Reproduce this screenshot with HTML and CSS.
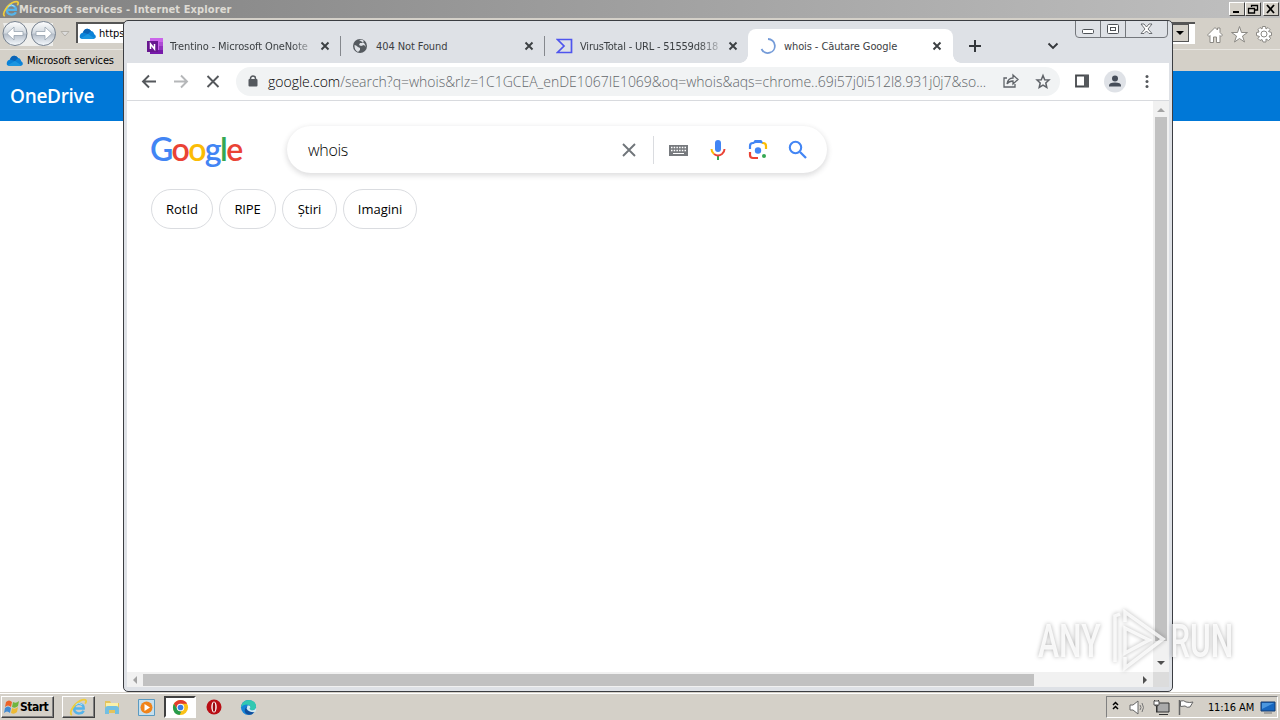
FILE: index.html
```html
<!DOCTYPE html>
<html lang="ro">
<head>
  <meta charset="UTF-8" />
  <title>whois - Căutare Google</title>
  <link rel="stylesheet" href="styles.css">
</head>
<body>
<!-- shared shapes -->
<svg class="defs">
  <symbol id="cloud" viewBox="0 0 17 12">
    <path d="M1 10C0 7 2 5 4 4.500C5 1 9-1 12 3C14 3 15 5 15 6C18 8 17 11 14 11H4Q2 11 1 10Z" fill="#0a82d8"/>
    <path d="M4 4.500C5 1 9-1 12 3L9 6Z" fill="#0b63b5"/><path d="M2 10L9 6L15 10L14 11H4Z" fill="#1c96e0"/>
  </symbol>
  <symbol id="ie" viewBox="0 0 20 20">
    <path d="M15.500 13.500C14 16.500 8.500 17.500 6 14C4 10 6.500 6 10 6C13.500 6 16 8.500 15.500 11H6.500" fill="none" stroke="#55b4ea" stroke-width="2.600"/>
    <path d="M3 18C-1 15 7 4 14 2C18 1 19 3 17 6" fill="none" stroke="#f0cd3c" stroke-width="1.900"/>
    <path d="M7 7Q10 4 14 7" fill="none" stroke="#b5e6ff" stroke-width="1"/>
  </symbol>
  <symbol id="close" viewBox="0 0 10 10"><path d="M1.500 1.500L8.500 8.500M8.500 1.500L1.500 8.500" stroke="#3c4043" stroke-width="1.900"/></symbol>
</svg>

<div class="desktop">
  <div class="ie-title">
    <svg width="18" height="18"><use href="#ie"/></svg>
    <span>Microsoft services - Internet Explorer</span>
    <div class="ie-controls">
      <i><svg width="12" height="10"><path d="M2 8H8" stroke="#000" stroke-width="2"/></svg></i>
      <i><svg width="12" height="10"><path d="M4.500 3V1.500H10.500V6H8M1.500 4.500H7.500V9H1.500ZM4 1.500H11M1 4.500H8" fill="none" stroke="#000" stroke-width="1.300"/></svg></i>
      <i class="last"><svg width="12" height="10"><path d="M2 1L9 9M9 1L2 9" stroke="#000" stroke-width="1.800"/></svg></i>
    </div>
  </div>
  <div class="ie-nav">
    <svg class="ie-arrows" width="74" height="30" viewBox="0 0 74 30">
      <defs><linearGradient id="ball" x2="0" y2="1"><stop stop-color="#fff"/><stop offset=".48" stop-color="#d1d8df"/><stop offset=".52" stop-color="#b3bcc7"/><stop offset="1" stop-color="#f7fbff"/></linearGradient></defs>
      <path d="M3 4H53V27H10Z" fill="#eeeeec"/>
      <circle cx="15" cy="14.500" r="12" fill="url(#ball)" stroke="#76818f"/>
      <circle cx="43.500" cy="14.500" r="12" fill="url(#ball)" stroke="#76818f"/>
      <g fill="#fff" stroke="#98a3b0" stroke-width=".8"><path d="M7 14.500L14 8V12.500H23V16.500H14V21Z"/><path d="M52 14.500L45 8V12.500H36V16.500H45V21Z"/></g>
      <path d="M61 12.500H69L65 17Z" fill="#ddd" stroke="#b3b0a9"/>
    </svg>
    <div class="ie-address"><svg width="17" height="12"><use href="#cloud"/></svg><span>https</span></div>
    <div class="ie-right">
      <div class="ie-drop"><b></b></div>
      <svg width="68" height="20" viewBox="0 0 68 20" fill="#fff" stroke="#8b8984">
        <path d="M1.500 11L9 3.500L11.500 6V4H14V8.500L16.500 11L15 12.500L14 11.500V18.500H10.500V13H7.500V18.500H4V11.500L3 12.500Z"/>
        <path d="M33.500 2.500L35.500 8.500H41.500L36.500 12L38.500 18L33.500 14.500L28.500 18L30.500 12L25.500 8.500H31.500Z"/>
        <path d="M56.500 2.500H59.500L60 5L62 3.500L64 5.500L62.500 7.500L65.500 8.500V11.500L63 12L64.500 14.500L62.500 16.500L60 15V18H57L56 15.500L54 16.500L52 14.500L53.500 12.500L50.500 11.500V8.500L53 8L52 5.500L54 3.500L56 5Z"/>
        <circle cx="58" cy="10" r="3"/>
      </svg>
    </div>
  </div>
  <div class="ie-favs"><svg width="17" height="12"><use href="#cloud"/></svg><span>Microsoft services</span></div>
  <div class="onedrive">OneDrive</div>
  <div class="ie-page"></div>

  <div class="taskbar">
    <div class="start">
      <svg width="16" height="16" viewBox="0 0 16 16"><path d="M2 3Q5 0 8 3L7 8Q4 5 1 8Z" fill="#ed6428"/><path d="M9 3Q12 5 15 2L14 7Q11 10 8 8Z" fill="#70b53d"/><path d="M1 9Q4 6 7 9L6 14Q3 11 0 14Z" fill="#428bd3"/><path d="M8 9Q11 11 14 8L13 13Q10 16 7 14Z" fill="#edba35"/></svg>
      <span>Start</span>
    </div>
    <div class="task raised"><svg width="19" height="19"><use href="#ie"/></svg></div>
    <div class="task"><svg width="18" height="18" viewBox="0 0 18 18"><path d="M2 3H7L8 5H16V15H2Z" fill="#e5c35c"/><path d="M3 5H15V10H3Z" fill="#faf0a9"/><path d="M2 16V11Q2 8 5 8H13Q16 8 16 11V16H12V12H6V16Z" fill="#72bfe2"/></svg></div>
    <div class="task"><svg width="17" height="17" viewBox="0 0 17 17"><path d="M.5.500H16.500V16.500H.5Z" fill="#c6dfed" stroke="#5a9ac1"/><circle cx="8.500" cy="8.500" r="6" fill="#f08319"/><path d="M6.500 5L12 8.500L6.500 12Z" fill="#fff"/></svg></div>
    <div class="task pressed"><svg width="17" height="17" viewBox="0 0 18 18"><circle cx="9" cy="9" r="8" fill="#fbc116"/><path d="M2 5Q5 1 9 1Q14 1 16 5H9L6 11Z" fill="#e33b2e"/><path d="M2 5L6 11Q8 14 10 13L8 17Q1 16 1 9Q1 7 2 5Z" fill="#269b4a"/><circle cx="9" cy="9" r="4" fill="#fff"/><circle cx="9" cy="9" r="3" fill="#397de4"/></svg></div>
    <div class="task"><svg width="16" height="16" viewBox="0 0 16 16"><circle cx="8" cy="8" r="7.500" fill="#b90e15"/><ellipse cx="8" cy="8" rx="2.700" ry="5.500" fill="#fff"/><ellipse cx="8" cy="8" rx="1.300" ry="4.800" fill="#9b0910"/></svg></div>
    <div class="task"><svg width="17" height="17" viewBox="0 0 18 18"><circle cx="9" cy="9" r="8" fill="#1684d7"/><path d="M1 9Q2 1 10 1Q17 2 17 8Q17 12 12 12Q9 11 11 9Q11 6 8 6Q4 5 1 9Z" fill="#32c8b1"/><path d="M7 8Q6 14 15 14Q12 18 7 16Q3 13 7 8Z" fill="#114e9c"/><path d="M11 9Q9 11 12 12Q16 12 17 9V13L15 14Q9 14 7 10L8 7Q11 6 11 9Z" fill="#d4e9ef"/></svg></div>
    <div class="tray">
      <svg width="86" height="20" viewBox="0 0 86 20" fill="none">
        <path d="M5 8L7.500 5.500L10 8M5 12L7.500 9.500L10 12" stroke="#000" stroke-width="1.500"/>
        <path d="M22 8H25L30 4V17L25 13H22Z" fill="#fff" stroke="#666"/><path d="M32 8Q34 10.500 32 13M34 6Q37 10.500 34 15" stroke="#777"/>
        <path d="M49 6H61V15H49Z" fill="#aaa" stroke="#333"/><path d="M51 17.500H60M46.500 3V7Q46.500 9 48.500 9V15.500M50.500 3V7Q50.500 9 48.500 9" stroke="#333"/><path d="M46 4H51V8H46Z" fill="#fff" stroke="#555"/>
        <path d="M71.500 3V18" stroke="#666" stroke-width="1.500"/><path d="M72.500 4Q76 3 78 5Q82 6 85 5L82 10Q79 11 77 9L72.500 9.500Z" fill="#fff" stroke="#666"/>
      </svg>
      <span>11:16 AM</span>
      <svg width="16" height="14" viewBox="0 0 16 14"><path d="M1 2H15V11H1Z" fill="#1767c0" stroke="#163d70"/><path d="M2 3H14L2 9Z" fill="#4b97df"/><path d="M4 13H12" stroke="#777"/></svg>
    </div>
  </div>

  <div class="chrome">
    <div class="tabstrip">
      <div class="tab">
        <svg class="fav" width="16" height="16" viewBox="0 0 16 16"><path d="M3 0H16V16H3Z" fill="#ca64ea"/><path d="M12 4H16V8H12Z" fill="#ae4bd5"/><path d="M12 8H16V12H12Z" fill="#9332bf"/><path d="M12 12H16V16H3V12Z" fill="#7719aa"/><rect y="3" width="11" height="11" fill="#68168f"/><path d="M3.500 11V6L7.500 11V6" fill="none" stroke="#fff" stroke-width="1.500"/></svg>
        <span class="label t1">Trentino - Microsoft OneNote</span><svg class="x"><use href="#close"/></svg>
      </div>
      <div class="tab">
        <svg class="fav" width="16" height="16" viewBox="0 0 16 16"><circle cx="8" cy="8" r="7" fill="#555a5f"/><path d="M2.500 7Q4 7 6 9L8 10V12L6 14Q2 12 2.500 7ZM7 2Q10 1 12 3L10 5L8 5L7 7L9 8L12 7L14 9Q13 6 12 5" fill="#dee1e6"/></svg>
        <span class="label t2">404 Not Found</span><svg class="x"><use href="#close"/></svg>
      </div>
      <div class="tab">
        <svg class="fav" width="17" height="16" viewBox="0 0 17 16"><path d="M1.500 1.500H15.500V14.500H1.500L8 8Z" fill="none" stroke="#4f55ee" stroke-width="1.700"/></svg>
        <span class="label t3">VirusTotal - URL - 51559d818</span><svg class="x"><use href="#close"/></svg>
      </div>
      <div class="tab active">
        <svg class="fav" width="16" height="16" viewBox="0 0 16 16"><path d="M8 1A7 7 0 1 1 1.500 11" fill="none" stroke="#749bd8" stroke-width="1.800"/></svg>
        <span class="label t4">whois - Căutare Google</span><svg class="x"><use href="#close"/></svg>
      </div>
      <svg class="plus" width="14" height="14"><path d="M7 1V13M1 7H13" stroke="#34373b" stroke-width="2"/></svg>
      <svg class="chev" width="12" height="8"><path d="M1.500 1.500L6 6L10.500 1.500" fill="none" stroke="#34373b" stroke-width="1.900"/></svg>
    </div>
    <svg class="win-controls" width="94" height="18" viewBox="0 0 94 18" fill="none" stroke="#74777c">
      <path d="M.5 0V13Q.5 16.500 4 16.500H89Q92.500 16.500 92.500 13V0M25.500 0V16M50.500 0V16"/>
      <g stroke="#4d5156"><rect x="7.500" y="8.500" width="11" height="4" rx="1" fill="#fff"/><rect x="32.500" y="3.500" width="11" height="9" rx="1" fill="#fff"/><rect x="35.500" y="6.500" width="5" height="3"/><path d="M66 3H69L71.500 6L74 3H77L73 8L77 12.500H74L71.500 10L69 12.500H66L70 8Z" fill="#fff" stroke-width=".8"/></g>
    </svg>

    <div class="toolbar">
      <svg class="nav-icons" width="84" height="18" viewBox="0 0 84 18" fill="none" stroke-width="1.900">
        <path d="M16 8.500H3M9 2.500L3 8.500L9 14.500" stroke="#55585c"/><path d="M34 8.500H47M41 2.500L47 8.500L41 14.500" stroke="#b5b7b9"/><path d="M67.500 3L78.500 14M78.500 3L67.500 14" stroke="#55585c"/>
      </svg>
      <div class="omnibox">
        <svg width="10" height="14" viewBox="0 0 10 14"><path d="M2.500 5V3.500A2.500 2.500 0 0 1 7.500 3.500V5" fill="none" stroke="#55595e" stroke-width="1.500"/><rect x=".5" y="4" width="9" height="7.500" rx="1" fill="#55595e"/></svg>
        <span class="url"><b>google.com</b>/search?q=whois&amp;rlz=1C1GCEA_enDE1067IE1069&amp;oq=whois&amp;aqs=chrome..69i57j0i512l8.931j0j7&amp;so...</span>
        <svg class="omni-icons" width="50" height="18" viewBox="0 0 50 18" fill="none" stroke="#5f6368" stroke-width="1.300">
          <path d="M5 5H2V14H13V11M5 11Q6 5 11 5V2L16 6.500L11 11V8Q7 8 5 11Z"/><path d="M41 2.500L42.700 6.700L47 7L43.800 9.900L44.800 14.500L41 12.100L37.200 14.500L38.200 9.900L35 7L39.300 6.700Z" stroke-width="1.500"/>
        </svg>
      </div>
      <svg class="tool-icons" width="84" height="24" viewBox="0 0 84 24">
        <path d="M2 5.500H14V16.500H2Z" fill="#fff" stroke="#45484c" stroke-width="1.800"/><path d="M10 5H15V17H10Z" fill="#55585c"/>
        <circle cx="41" cy="11.500" r="11" fill="#dfe2e7"/><circle cx="41" cy="8.500" r="3" fill="#464d59"/><path d="M35 16.500V15.500Q35 12.500 41 12.500T47 15.500V16.500Z" fill="#464d59"/>
        <g fill="#55585c"><circle cx="73" cy="6.500" r="1.500"/><circle cx="73" cy="11.500" r="1.500"/><circle cx="73" cy="16.500" r="1.500"/></g>
      </svg>
    </div>

    <div class="viewport">
      <div class="results">
        <div class="search-row">
          <div class="google"><span class="b">G</span><span class="r">o</span><span class="y">o</span><span class="b">g</span><span class="g">l</span><span class="r">e</span></div>
          <div class="searchbox">
            <span>whois</span>
            <svg width="200" height="30" viewBox="0 0 200 30" fill="none">
              <path d="M6 9L18 21M18 9L6 21" stroke="#70757a" stroke-width="1.900"/><path d="M36.500 1V29" stroke="#dadce0"/>
              <rect x="52" y="10" width="19" height="11" fill="#777a7e"/><path d="M54 12.500H70M54 15.500H70" stroke="#fff" stroke-dasharray="1.500 1.200" stroke-width="1.300"/><path d="M56 18.500H67" stroke="#fff"/>
              <rect x="98" y="5" width="6" height="12" rx="3" fill="#4285f4"/><path d="M101 20V25" stroke="#34a853" stroke-width="2"/><path d="M94.500 14Q94.500 17 97 19" stroke="#fbbc04" stroke-width="2"/><path d="M97 19Q101 22 105 19Q107.500 17 107.500 14" stroke="#ea4335" stroke-width="2"/>
              <g stroke-width="2.200"><path d="M133 14V11Q133 8 136 8H137M137 8L138.500 6H143.500L145 8" stroke="#4285f4"/><path d="M145 8H146Q149 8 149 11V14" stroke="#fbbc04"/><path d="M133 17V20Q133 23 136 23H141" stroke="#ea4335"/></g><path d="M136 8L138 5H144L146 8Z" fill="#4285f4"/><circle cx="141" cy="15.500" r="3.200" fill="#4285f4"/><circle cx="147" cy="21" r="2" fill="#34a853"/>
              <circle cx="178.500" cy="12.500" r="5.700" stroke="#4285f4" stroke-width="2.100"/><path d="M183 17L189 23" stroke="#4285f4" stroke-width="2.300"/>
            </svg>
          </div>
        </div>
        <div class="chips"><span class="c1">RotId</span><span class="c2">RIPE</span><span class="c3">Știri</span><span class="c4">Imagini</span></div>
      </div>
      <div class="vscroll"><i class="up"></i><div class="thumb"></div><i class="down"></i></div>
      <div class="hscroll"><i class="left"></i><div class="thumb"></div><i class="right"></i></div>
      <div class="corner"></div>
    </div>
  </div>

  <div class="watermark">
    <span>ANY</span>
    <svg width="60" height="64" viewBox="0 0 60 64" fill="none" stroke="#fff" stroke-width="3.500"><path d="M8 53V7L13 5M18 13V3L56 30L18 59V48M18 19V44L42 31Z"/></svg>
    <span>RUN</span>
  </div>
</div>
</body>
</html>
```
FILE: styles.css
```css
* {
  box-sizing: border-box;
}
body {
  margin: 0;
  overflow: hidden;
  font-family: 'DejaVu Sans Condensed', 'DejaVu Sans', sans-serif;
  font-size: 11px;
  color: #000;
}
svg {
  flex: none;
  display: block;
}
span {
  white-space: nowrap;
}
.defs {
  position: absolute;
  width: 0;
  height: 0;
}
.desktop {
  position: relative;
  width: 1280px;
  height: 720px;
  display: flex;
  flex-direction: column;
  background: #d4d0c8;
}

/* internet explorer */
.ie-title {
  height: 18px;
  padding-left: 2px;
  display: flex;
  align-items: center;
  background: linear-gradient(90deg, #808080, #c0c0c0);
  color: #dedbd4;
  font-weight: bold;
}
.ie-title span {
  letter-spacing: 0.1px;
  margin-left: -1px;
}
.ie-controls {
  margin-left: auto;
  display: flex;
  padding-right: 1px;
}
.ie-controls i {
  width: 16px;
  height: 14px;
  padding: 1px;
  background: #d4d0c8;
  border: 1px solid;
  border-color: #fff #404040 #404040 #fff;
}
.ie-controls .last {
  margin-left: 2px;
}
.ie-nav {
  height: 31px;
  display: flex;
  align-items: center;
}
.ie-address {
  width: 70px;
  height: 21px;
  margin: 0 0 2px 2px;
  padding-left: 1px;
  display: flex;
  align-items: center;
  gap: 3px;
  background: #fff;
  border: 1px solid #555;
  border-width: 2px 0 0 2px;
}
.ie-right {
  margin-left: auto;
  display: flex;
  align-items: center;
  gap: 11px;
  padding-right: 6px;
}
.ie-drop {
  width: 24px;
  height: 22px;
  margin-bottom: 1px;
  background: #fff;
  border-top: 2px solid #555;
}
.ie-drop b {
  display: flex;
  width: 18px;
  height: 18px;
  background: #d4d0c8;
  border: 1px solid #555;
  align-items: center;
  justify-content: center;
}
.ie-drop b::after {
  content: '';
  border: 4px solid transparent;
  border-top-color: #000;
  border-bottom: 0;
}
.ie-favs {
  height: 22px;
  padding-left: 6px;
  display: flex;
  align-items: center;
  gap: 4px;
  border-top: 1px solid #e8e6e1;
}
.ie-favs span {
  letter-spacing: -0.1px;
}
.onedrive {
  height: 50px;
  padding-left: 10px;
  background: #0078d7;
  color: #fff;
  font: 600 19px/50px 'Open Sans', sans-serif;
  letter-spacing: -0.3px;
}
.ie-page {
  flex: 1;
  background: #fff;
}

/* taskbar */
.taskbar {
  height: 28px;
  padding: 3px 2px 2px 1px;
  display: flex;
  background: #d4d0c8;
  border-top: 1px solid #d4d0c8;
  box-shadow: inset 0 1px #fff;
}
.start {
  width: 53px;
  margin-right: 8px;
  display: flex;
  align-items: center;
  padding-left: 2px;
  font-weight: bold;
  border: 1px solid;
  border-color: #fff #404040 #404040 #fff;
  box-shadow: inset -1px -1px #808080;
}
.start span {
  font-size: 12px;
  letter-spacing: -0.5px;
}
.task {
  width: 34px;
  display: flex;
  align-items: center;
  justify-content: center;
  border: 1px solid transparent;
}
.raised {
  width: 33px;
  border-color: #fff #404040 #404040 #fff;
  box-shadow: inset -1px -1px #808080;
}
.pressed {
  width: 32px;
  margin: 0 1px;
  background: #fff;
  border: 2px solid;
  border-color: #404040 #fff #fff #404040;
}
.tray {
  width: 172px;
  margin-left: auto;
  padding: 0 1px;
  display: flex;
  align-items: center;
  justify-content: space-between;
  border: 1px solid;
  border-color: #808080 #fff #fff #808080;
}
.tray span {
  margin-left: 8px;
  letter-spacing: -0.1px;
}

/* chrome window */
.chrome {
  position: absolute;
  left: 123px;
  top: 20px;
  width: 1050px;
  height: 672px;
  display: flex;
  flex-direction: column;
  padding: 0 3px 4px;
  border: 1px solid #3b3d42;
  border-radius: 5px;
  background: #dee1e6;
}
.win-controls {
  position: absolute;
  top: 0;
  right: 3px;
}
.tabstrip {
  height: 42px;
  padding: 8px 0 0 9px;
  display: flex;
  align-items: center;
  color: #3c4043;
}
.tab {
  width: 204px;
  height: 34px;
  padding: 0 10px 0 11px;
  display: flex;
  align-items: center;
  position: relative;
}
.tab:nth-child(-n+2)::after {
  content: '';
  position: absolute;
  right: -1px;
  width: 1px;
  height: 20px;
  background: #85888d;
}
.fav {
  margin-right: 8px;
}
.tab:nth-child(n+2) .fav {
  margin-left: 1px;
}
.label {
  width: 157px;
  margin-right: -17px;
}
.x {
  width: 10px;
  height: 10px;
  margin-left: auto;
}
.t1 {
  margin-left: -1px;
  margin-right: -16px;
  letter-spacing: -0.12px;
  -webkit-mask-image: linear-gradient(90deg, #000 122px, transparent 148px);
}
.t2 {
  letter-spacing: -0.1px;
}
.t3 {
  margin-left: -1px;
  letter-spacing: -0.2px;
  -webkit-mask-image: linear-gradient(90deg, #000 118px, transparent 146px);
}
.t4 {
  letter-spacing: -0.1px;
}
.active {
  width: 205px;
  padding-right: 11px;
  background: #fff;
  border-radius: 8px 8px 0 0;
}
.active::before,
.active::after {
  content: '';
  position: absolute;
  bottom: 0;
  left: -8px;
  width: 8px;
  height: 8px;
  background: radial-gradient(circle at 0 0, transparent 7.5px, #fff 8px);
}
.active::after {
  left: 100%;
  background: radial-gradient(circle at 100% 0, transparent 7.5px, #fff 8px);
}
.plus {
  margin-left: 15px;
}
.chev {
  margin-left: 65px;
}
.toolbar {
  height: 38px;
  display: flex;
  align-items: center;
  background: #fff;
  border-bottom: 1px solid #d8dade;
}
.nav-icons {
  margin-left: 13px;
}
.omnibox {
  width: 824px;
  height: 29px;
  margin-left: 12px;
  padding-left: 12px;
  display: flex;
  align-items: center;
  background: #f1f3f4;
  border-radius: 15px;
}
.url {
  width: 727px;
  margin-left: 10px;
  color: #63676b;
  font: 300 14px 'Open Sans', sans-serif;
  letter-spacing: -0.02px;
}
.url b {
  font-weight: 300;
  color: #000;
}
.omni-icons {
  margin-left: 7px;
}
.tool-icons {
  margin-left: 14px;
}
.viewport {
  flex: 1;
  display: grid;
  grid-template-columns: 1fr 16px;
  grid-template-rows: 1fr 15px;
  background: #fff;
}
.results {
  padding: 25px 0 0 24px;
}
.search-row {
  display: flex;
  height: 48px;
}
.google {
  width: 136px;
  margin-left: -1px;
  margin-right: 1px;
  font: 600 32px/46px 'Lato', sans-serif;
  letter-spacing: -1.6px;
}
.b { color: #4285f4; }
.r { color: #ea4335; }
.y { color: #fbbc05; }
.g { color: #34a853; }
.searchbox {
  width: 540px;
  height: 47px;
  padding: 0 10px 0 21px;
  display: flex;
  align-items: center;
  justify-content: space-between;
  border-radius: 24px;
  box-shadow: 0 2px 5px 1px rgba(64, 60, 67, .16);
  font: 300 16px 'Open Sans', sans-serif;
}
.searchbox span {
  letter-spacing: -0.3px;
}
.chips {
  display: flex;
  gap: 6px;
  margin-top: 15px;
}
.chips span {
  height: 40px;
  border: 1px solid #dadce0;
  border-radius: 20px;
  text-align: center;
  font: 13px/38px 'Open Sans', sans-serif;
}
.chips .c1 { width: 62px; }
.chips .c2 { width: 57px; letter-spacing: -0.2px; }
.chips .c3 { width: 55px; }
.chips .c4 { width: 74px; }

/* scrollbars */
.vscroll,
.hscroll {
  display: flex;
  align-items: center;
  background: #f1f1f1;
}
.vscroll {
  flex-direction: column;
}
.vscroll .thumb {
  width: 12px;
  height: 524px;
  background: #c1c1c1;
}
.hscroll .thumb {
  width: 891px;
  height: 12px;
  background: #c1c1c1;
}
.vscroll i,
.hscroll i {
  border: 4px solid transparent;
}
.vscroll .up {
  margin: 7px 0 5px;
  border-top: 0;
  border-bottom-color: #a3a3a3;
}
.vscroll .down {
  margin-top: auto;
  margin-bottom: 7px;
  border-bottom: 0;
  border-top-color: #505050;
}
.hscroll .left {
  margin: 0 6px;
  border-left: 0;
  border-right-color: #a3a3a3;
}
.hscroll .right {
  margin-left: auto;
  margin-right: 6px;
  border-right: 0;
  border-left-color: #505050;
}
.corner {
  background: #dcdcdc;
}

/* recording mark over the desktop */
.watermark {
  position: absolute;
  left: 1038px;
  top: 609px;
  display: flex;
  align-items: center;
  color: rgba(255, 255, 255, .85);
  font: 500 46px/64px 'Roboto', sans-serif;
  filter: drop-shadow(0 0 2px rgba(0, 0, 0, .35));
}
.watermark span {
  width: 65px;
  transform: scaleX(.69);
  transform-origin: 0 0;
}
.watermark svg {
  margin: 0 3px 0 4px;
  opacity: .8;
}
```
